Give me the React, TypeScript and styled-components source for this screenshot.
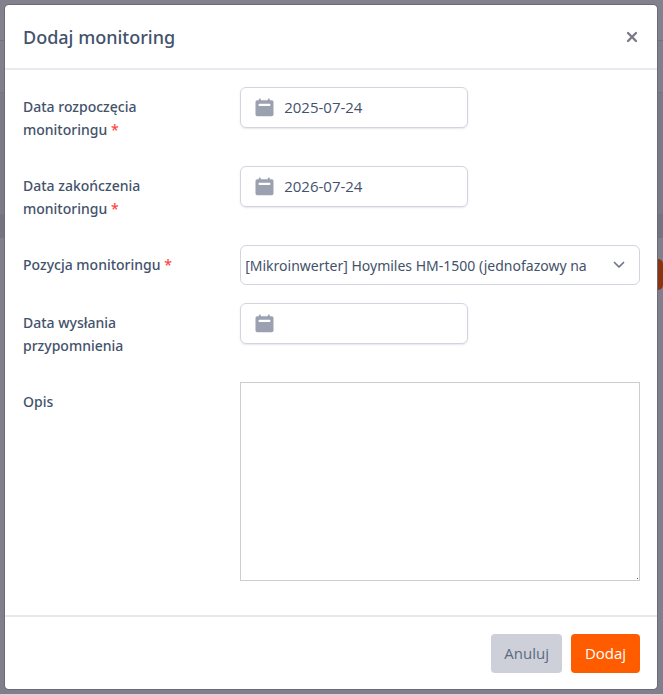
import React from "react";
import styled, { createGlobalStyle } from "styled-components";

const GlobalStyle = createGlobalStyle`
  *, *::before, *::after { box-sizing: border-box; }
  body {
    margin: 0;
    background: #807f8b;
    color: #43526b;
    font-family: "Open Sans", "Noto Sans", sans-serif;
    font-size: 15px;
    line-height: 23px;
  }
  button, input, select, textarea { font: inherit; color: inherit; }
`;

const Page = styled.div`
  position: relative;
  min-height: 100vh;
  padding: 5px 6px 5px 5px;
  border-bottom: 1px solid #d6d6da;
  background: linear-gradient(
    #82818d 40px, #72717d 40px, #72717d 41px,
    #807f8b 41px, #807f8b 92px, #767581 92px, #767581 93px,
    #7b7a86 93px, #7b7a86 214px, #74737f 214px, #74737f 238px,
    #807f8b 238px
  );
`;

const PageAction = styled.div`
  position: absolute;
  top: 259px;
  right: 0;
  width: 20px;
  height: 31px;
  border-radius: 5px;
  background: #8b3410;
`;

const Dialog = styled.section`
  position: relative;
  display: flex;
  flex-direction: column;
  background: #fff;
  border-radius: 4px;
  box-shadow: 0 0 0 1px #6b6a76;
`;

const Header = styled.header`
  display: flex;
  align-items: center;
  justify-content: space-between;
  height: 65px;
  padding: 0 18px;
  border-bottom: 2px solid #e9e9ef;
`;

const Title = styled.h1`
  margin: 0;
  font-family: "Noto Sans", sans-serif;
  font-size: 18px;
  line-height: 28px;
  font-weight: 500;
`;

const CloseButton = styled.button`
  display: flex;
  padding: 1px;
  border: 0;
  background: none;
  color: #797885;
`;

const Form = styled.form`
  display: flex;
  flex-direction: column;
`;

const Fields = styled.div`
  display: flex;
  flex-direction: column;
  gap: 18px;
  padding: 17px 17px 34px 18px;
`;

const Field = styled.div`
  display: grid;
  grid-template-columns: 35.2% 1fr;
  align-items: start;
`;

const Label = styled.label`
  padding: 8px 48px 7px 0;
  font-family: "Noto Sans", sans-serif;
  font-size: 14px;
  font-weight: 500;
`;

const Required = styled.span`
  color: #ff4545;
`;

const DateBox = styled.div`
  display: flex;
  align-items: center;
  gap: 10px;
  width: 57%;
  height: 41px;
  padding: 0 14px;
  border: 1px solid #d3d4de;
  border-radius: 6px;
  box-shadow: 0 1px 2px #e6e6ec;
  color: #9ba1b0;
`;

const DateInput = styled.input`
  flex: 1;
  min-width: 0;
  padding: 0;
  border: 0;
  outline: 0;
  background: none;
  color: #43526b;
`;

const SelectBox = styled.div`
  position: relative;
  display: grid;
`;

const Select = styled.select`
  appearance: none;
  width: 100%;
  height: 40px;
  padding: 0 43px 0 4px;
  border: 1px solid #d3d4de;
  border-radius: 6px;
  background: #fff;
  font-family: "Noto Sans", sans-serif;
  font-size: 14px;
`;

const Chevron = styled.svg`
  position: absolute;
  right: 15px;
  top: 14px;
  pointer-events: none;
`;

const TextArea = styled.textarea`
  width: 100%;
  height: 199px;
  padding: 6px;
  border: 1px solid #cdcdd1;
  border-radius: 0;
  background: #fff;
  resize: none;
`;

const TextAreaBox = styled.div`
  position: relative;
  display: grid;
`;

const Grip = styled.span`
  position: absolute;
  right: 2px;
  bottom: 2px;
  width: 1px;
  height: 1px;
  background: #555;
`;

const Footer = styled.footer`
  display: flex;
  justify-content: flex-end;
  gap: 9px;
  padding: 17px 17px 16px;
  border-top: 2px solid #e8e8ea;
`;

const Button = styled.button<{ $primary?: boolean }>`
  min-width: 69px;
  height: 39px;
  padding: 0 13px;
  border: 0;
  border-radius: 4px;
  background: ${(p) => (p.$primary ? "#ff5c00" : "#cdd0d9")};
  color: ${(p) => (p.$primary ? "#fff" : "#5d6a80")};
`;

const CalendarIcon = () => (
  <svg width="19" height="19" viewBox="0 0 19 19" aria-hidden="true">
    <path
      fill="currentColor"
      fillRule="evenodd"
      d="M3.800 1.500a1 1 0 0 1 2 0V2.200h7V1.500a1 1 0 0 1 2 0V2.200h2A1.700 1.700 0 0 1 18.500 3.900v12.700a1.700 1.700 0 0 1-1.700 1.700h-14.600a1.700 1.700 0 0 1-1.700-1.700V3.900a1.700 1.700 0 0 1 1.700-1.700h1.600zM4.600 5.800a1.100 1.100 0 0 0 0 2.200h9.800a1.100 1.100 0 0 0 0-2.200z"
    />
  </svg>
);

type DateFieldProps = { id: string; label: string; value?: string; required?: boolean };

const DateField = ({ id, label, value = "", required }: DateFieldProps) => (
  <Field>
    <Label htmlFor={id}>
      {label} {required && <Required>*</Required>}
    </Label>
    <DateBox>
      <CalendarIcon />
      <DateInput id={id} type="text" defaultValue={value} required={required} />
    </DateBox>
  </Field>
);

export default function App() {
  return (
    <Page>
      <GlobalStyle />
      <PageAction />
      <Dialog role="dialog" aria-labelledby="dialog-title">
        <Header>
          <Title id="dialog-title">Dodaj monitoring</Title>
          <CloseButton type="button" aria-label="Zamknij">
            <svg width="12" height="12" viewBox="0 0 12 12" aria-hidden="true">
              <path d="M2 2l8 8M10 2l-8 8" stroke="currentColor" strokeWidth="2.300" strokeLinecap="round" />
            </svg>
          </CloseButton>
        </Header>
        <Form onSubmit={(e) => e.preventDefault()}>
          <Fields>
            <DateField id="start" label="Data rozpoczęcia monitoringu" value="2025-07-24" required />
            <DateField id="end" label="Data zakończenia monitoringu" value="2026-07-24" required />
            <Field>
              <Label htmlFor="item">
                Pozycja monitoringu <Required>*</Required>
              </Label>
              <SelectBox>
                <Select id="item" defaultValue="hm1500">
                  <option value="hm1500">[Mikroinwerter] Hoymiles HM-1500 (jednofazowy na</option>
                </Select>
                <Chevron width="12" height="12" viewBox="0 0 12 12" aria-hidden="true">
                  <path
                    d="M1.500 3.500L6 8l4.500-4.500"
                    fill="none"
                    stroke="#6f7482"
                    strokeWidth="1.700"
                    strokeLinecap="round"
                    strokeLinejoin="round"
                  />
                </Chevron>
              </SelectBox>
            </Field>
            <DateField id="reminder" label="Data wysłania przypomnienia" />
            <Field>
              <Label htmlFor="description">Opis</Label>
              <TextAreaBox>
                <TextArea id="description" />
                <Grip />
              </TextAreaBox>
            </Field>
          </Fields>
          <Footer>
            <Button type="button">Anuluj</Button>
            <Button type="submit" $primary>
              Dodaj
            </Button>
          </Footer>
        </Form>
      </Dialog>
    </Page>
  );
}
